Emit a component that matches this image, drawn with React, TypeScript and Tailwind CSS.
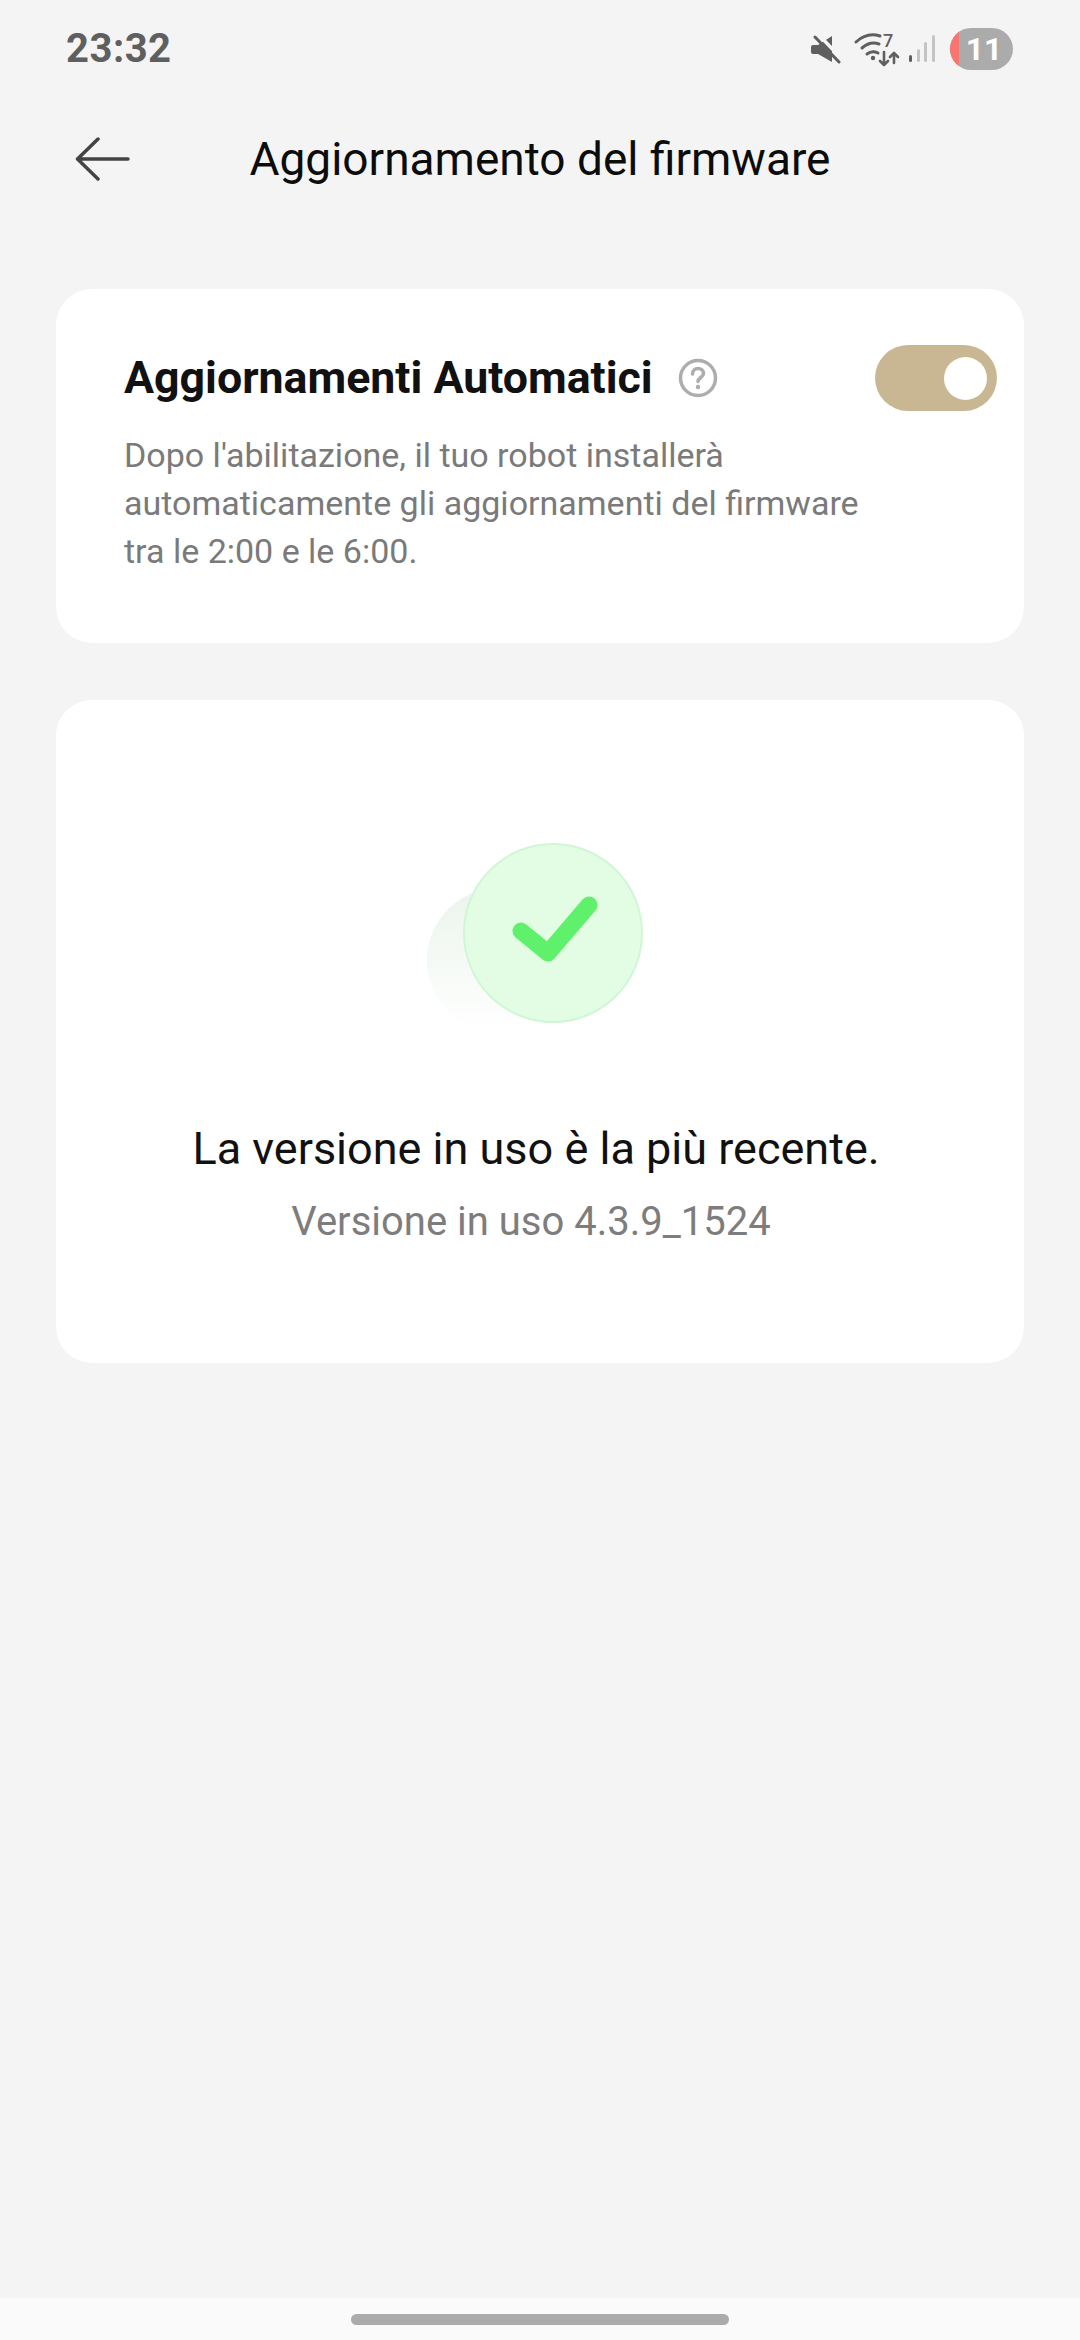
import React from 'react'

const StatusIcons = () => (
    <div className="flex items-center">
        <svg width="32" height="30" viewBox="0 0 32 30" className="mr-[8px]">
            <path d="M3 11h5L22 2v26L8 20H3a2 2 0 0 1-2-2v-5a2 2 0 0 1 2-2z" fill="#5f5f5f" />
            <path d="M8 0L33 26" stroke="#f4f4f4" strokeWidth="3.500" />
            <path d="M5 3l24 25" stroke="#5f5f5f" strokeWidth="3" strokeLinecap="round" />
        </svg>
        <svg width="50" height="38" viewBox="0 0 50 38" className="mr-[8px]">
            <g fill="none" stroke="#5f5f5f" strokeWidth="3" strokeLinecap="round">
                <path d="M6 12Q17 2 30 6" />
                <path d="M12 18Q20 11 29 14" />
                <path d="M17 24Q22 20 28 23" />
            </g>
            <circle cx="23" cy="28" r="2.200" fill="#5f5f5f" />
            <path d="M34 22V35M30 31l4 4 4-4M44 33V23M40 27l4-4 4 4" fill="none" stroke="#5f5f5f" strokeWidth="2.600" strokeLinecap="round" strokeLinejoin="round" />
            <text x="33" y="17" fontSize="18" fontWeight="500" fill="#5f5f5f">7</text>
        </svg>
        <svg width="28" height="30" viewBox="0 0 28 30" className="mr-[14px]">
            <rect x="1" y="21" width="3" height="7" rx="1.500" fill="#5f5f5f" />
            <rect x="9" y="15" width="3" height="13" rx="1.500" fill="#c4c4c4" />
            <rect x="16" y="8" width="3" height="20" rx="1.500" fill="#c4c4c4" />
            <rect x="24" y="1" width="3" height="27" rx="1.500" fill="#c4c4c4" />
        </svg>
        <div className="relative flex h-[42px] w-[63px] items-center justify-center overflow-hidden rounded-full bg-[#ababab]">
            <div className="absolute left-0 top-0 h-full w-[9px] bg-[#f8766f]" />
            <span className="pl-[5px] text-[32px] font-bold text-white">11</span>
        </div>
    </div>
)

const App = () => {
    return (
        <div className="flex h-[2340px] w-[1080px] flex-col bg-[#f4f4f4] font-['Roboto',sans-serif]">
            <div className="flex h-[98px] items-center justify-between pl-[66px] pr-[67px]">
                <span className="text-[40px] font-bold leading-none tracking-[0.5px] text-[#5f5f5f]">23:32</span>
                <StatusIcons />
            </div>

            <div className="flex h-[122px] items-center">
                <svg width="56" height="44" viewBox="0 0 56 44" className="ml-[75px] shrink-0">
                    <path d="M53 22H3M23 2L2.500 22 23 42" fill="none" stroke="#444444" strokeWidth="3.500" strokeLinecap="round" strokeLinejoin="round" />
                </svg>
                <h1 className="flex-1 pr-[131px] text-center text-[46px] font-normal leading-none text-[#0c0c0c]">Aggiornamento del firmware</h1>
            </div>

            <div className="flex flex-1 flex-col gap-[57px] px-[56px] pt-[69px]">
                <div className="h-[354px] rounded-[36px] bg-white pl-[68px] pr-[27px] pt-[56px]">
                    <div className="flex items-center justify-between">
                        <div className="flex items-center gap-[25px]">
                            <span className="text-[44.7px] font-bold leading-[66px] text-[#111111]">Aggiornamenti Automatici</span>
                            <svg width="40" height="40" viewBox="0 0 40 40">
                                <circle cx="20" cy="20" r="17.500" fill="none" stroke="#adadad" strokeWidth="3.500" />
                                <path d="M14.500 16c0-3.500 2.500-5.500 5.500-5.500s5.500 2 5.500 5c0 4-5.500 4-5.500 8" fill="none" stroke="#adadad" strokeWidth="3.500" strokeLinecap="round" />
                                <circle cx="20" cy="29" r="2.200" fill="#adadad" />
                            </svg>
                        </div>
                        <div className="flex h-[66px] w-[122px] items-center justify-end rounded-full bg-[#c9b692] pr-[10px]">
                            <div className="h-[43px] w-[43px] rounded-full bg-white" />
                        </div>
                    </div>
                    <p className="mt-[20px] text-[34px] leading-[48px] text-[#7a7a7a]">
                        Dopo l'abilitazione, il tuo robot installerà
                        <br />
                        automaticamente gli aggiornamenti del firmware
                        <br />
                        tra le 2:00 e le 6:00.
                    </p>
                </div>

                <div className="flex h-[663px] flex-col items-center rounded-[36px] bg-white pt-[120px]">
                    <svg width="280" height="230" viewBox="400 820 280 230">
                        <defs>
                            <linearGradient id="shade" x1="0" y1="0" x2="0" y2="1">
                                <stop offset="0" stopColor="#ebf4ec" />
                                <stop offset="1" stopColor="#ffffff" />
                            </linearGradient>
                        </defs>
                        <circle cx="499" cy="960" r="72" fill="url(#shade)" />
                        <circle cx="553" cy="933" r="89" fill="#e3fde4" stroke="#d0f7d5" strokeWidth="2" />
                        <path d="M521 931L548 953 589 905" fill="none" stroke="#5ff06c" strokeWidth="17" strokeLinecap="round" strokeLinejoin="round" />
                    </svg>
                    <p className="mr-[8px] mt-[69px] text-[45px] leading-[60px] text-[#111111]">La versione in uso è la più recente.</p>
                    <p className="mr-[18px] mt-[15px] text-[40px] leading-[56px] text-[#7d7d7d]">Versione in uso 4.3.9_1524</p>
                </div>
            </div>

            <div className="flex h-[42px] justify-center bg-[#fafafa] pt-[16px]">
                <div className="h-[11px] w-[378px] rounded-full bg-[#ababab]" />
            </div>
        </div>
    )
}

export default App
